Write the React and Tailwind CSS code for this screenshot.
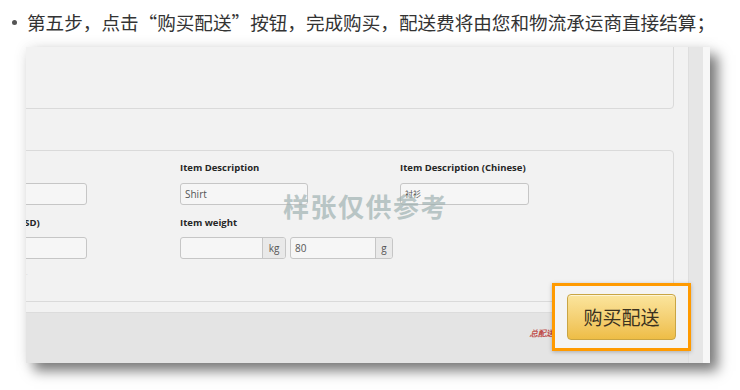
const uiFont = { fontFamily: '"Open Sans", "Noto Sans", Arial, sans-serif' }

function Label({ children }) {
  return (
    <p className="h-[12px] whitespace-nowrap text-[9.5px] font-bold leading-[12px] text-[#262626]">
      {children}
    </p>
  )
}

function TextInput({ value, width, cjk }) {
  return (
    <div
      className={`mt-[9px] flex h-[22px] items-center rounded-[3px] border border-[#c6c6c6] bg-[#f6f6f6] px-[4px] text-[#555] ${width} ${cjk ? 'text-[8px]' : 'text-[10px]'}`}
    >
      {value}
    </div>
  )
}

function UnitInput({ value, unit, width, addon }) {
  return (
    <div
      className={`flex h-[22px] overflow-hidden rounded-[3px] border border-[#c6c6c6] bg-[#f6f6f6] text-[10px] text-[#555] ${width}`}
    >
      <div className="flex flex-1 items-center px-[4px]">{value}</div>
      <div
        className={`flex items-center justify-center border-l border-[#c6c6c6] bg-[#e9e9e9] text-[#555] ${addon}`}
      >
        {unit}
      </div>
    </div>
  )
}

export default function App() {
  return (
    <div className="relative h-[390px] w-[740px] overflow-hidden bg-white">
      <div
        className="flex h-[44px] items-center pl-[12px] text-[#333]"
        style={{ fontFamily: '"Noto Sans CJK SC", "Noto Sans", sans-serif' }}
      >
        <span className="mr-[10px] h-[5px] w-[5px] rounded-full bg-[#555]" />
        <span className="text-[18.6px] leading-none">
          第五步，点击“购买配送”按钮，完成购买，配送费将由您和物流承运商直接结算；
        </span>
      </div>

      <div
        className="ml-[26px] mt-[3px] flex h-[316px] w-[684px] overflow-hidden bg-[#f2f2f2] shadow-[8px_8px_12px_rgba(0,0,0,0.5),0_0_14px_rgba(0,0,0,0.08)]"
        style={uiFont}
      >
        <div className="flex w-[662px] shrink-0 flex-col">
          <div className="-ml-[80px] -mt-[10px] h-[72px] w-[728px] shrink-0 rounded-[4px] border border-[#dadada]" />

          <div className="-ml-[80px] mt-[41px] h-[152px] w-[728px] shrink-0 rounded-[4px] border border-[#dadada] pl-[13px] pt-[11px]">
            <div className="flex">
              <div className="w-[220px] shrink-0">
                <div className="h-[12px]" />
                <TextInput value="" width="w-[127px]" />
              </div>
              <div className="w-[220px] shrink-0">
                <Label>Item Description</Label>
                <TextInput value="Shirt" width="w-[128px]" />
              </div>
              <div className="w-[220px] shrink-0">
                <Label>Item Description (Chinese)</Label>
                <TextInput
                  value={<span style={{ fontFamily: '"Noto Sans CJK SC", sans-serif' }}>衬衫</span>}
                  width="w-[129px]"
                  cjk
                />
              </div>
            </div>
            <div className="mt-[12px] flex">
              <div className="w-[220px] shrink-0">
                <Label>Item Value (USD)</Label>
                <div className="mt-[8px] h-[22px] w-[127px] rounded-[3px] border border-[#c6c6c6] bg-[#f6f6f6]" />
                <p className="mt-[12px] pl-[66px] text-[6px] leading-none text-[#bbb]">·</p>
              </div>
              <div className="w-[220px] shrink-0">
                <Label>Item weight</Label>
                <div className="mt-[8px] flex gap-[4px]">
                  <UnitInput value="" unit="kg" width="w-[106px]" addon="w-[23px]" />
                  <UnitInput value="80" unit="g" width="w-[103px]" addon="w-[17px]" />
                </div>
              </div>
            </div>
          </div>

          <div className="mt-[10px] flex h-[51px] shrink-0 justify-end border-t border-[#dcdcdc] bg-[#e4e4e4] pr-[118px] pt-[15px]">
            <span className="text-[8px] font-bold italic leading-[9px] text-[#c0504d]">
              总配送费：
            </span>
          </div>
        </div>
        <div className="w-[15px] shrink-0 border-l border-[#dedede] bg-[#e6e6e6]" />
        <div className="w-[7px] shrink-0 bg-[#f7f7f7]" />
      </div>

      <div
        className="absolute left-[283px] top-[193px] whitespace-nowrap text-[26px] font-bold leading-none tracking-[1.5px] text-[#9fb1b1]/70"
        style={{ fontFamily: '"Noto Sans CJK SC", sans-serif' }}
      >
        样张仅供参考
      </div>

      <div className="absolute left-[552px] top-[283px] flex h-[68px] w-[139px] items-center justify-center border-[3px] border-[#ff9a00] bg-[#f4f4f4] shadow-[0_1px_4px_rgba(0,0,0,0.25)]">
        <div
          className="flex h-[46px] w-[109px] items-center justify-center rounded-[4px] border border-[#c9a544] bg-gradient-to-b from-[#fbe59d] to-[#eebd45] text-[19px] text-[#3b3220] shadow-[inset_0_1px_0_rgba(255,255,255,0.6)]"
          style={{ fontFamily: '"Noto Sans CJK SC", sans-serif' }}
        >
          购买配送
        </div>
      </div>
    </div>
  )
}
